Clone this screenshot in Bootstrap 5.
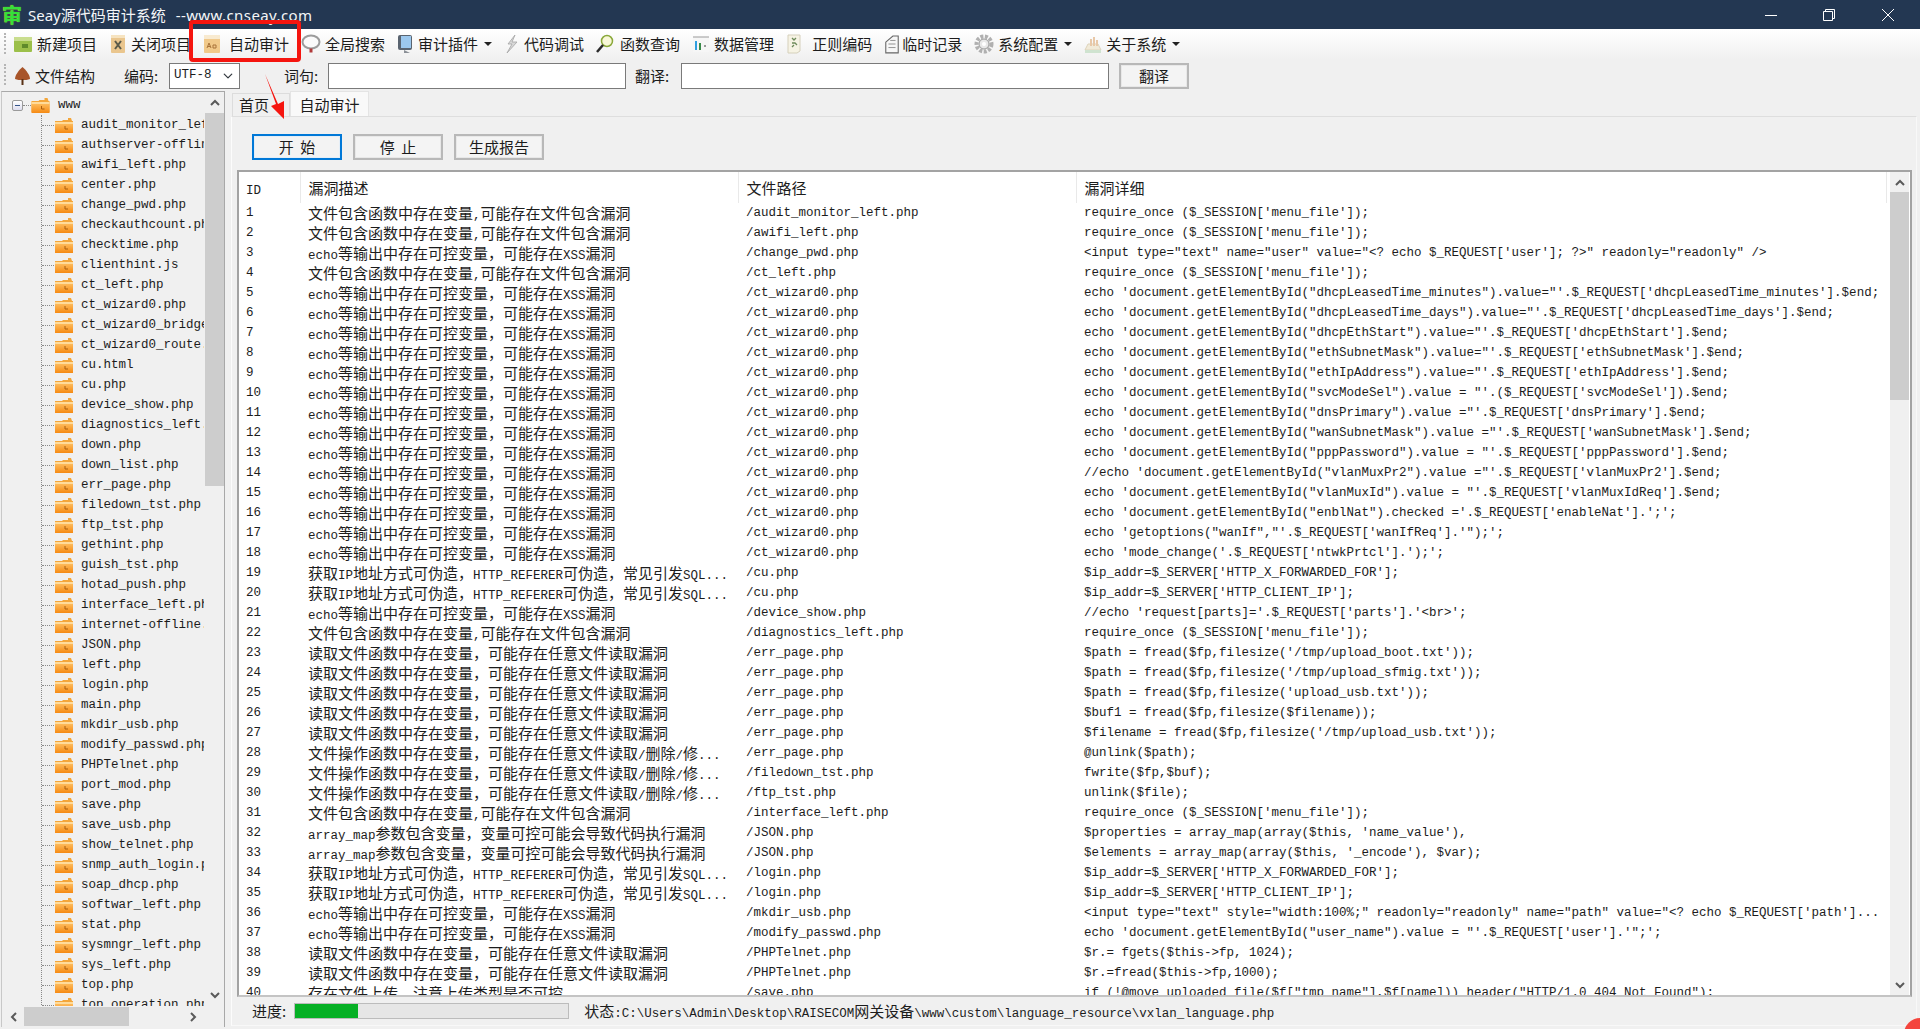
<!DOCTYPE html>
<html lang="zh-CN">
<head>
<meta charset="utf-8">
<title>Seay源代码审计系统</title>
<link href="https://cdn.jsdelivr.net/npm/bootstrap@5.3.0/dist/css/bootstrap.min.css" rel="stylesheet">
<style>
html,body{height:100%;overflow:hidden}
body{background:#f0f0f0;color:#1c1c1c;font-family:"Noto Sans CJK SC","Liberation Sans",sans-serif;font-size:15px;line-height:20px}
.la{font-family:"Liberation Mono","Noto Sans CJK SC",monospace;font-size:12.5px;line-height:1}
.shell{position:relative;width:1920px;height:1029px;overflow:hidden}
.wintitle{height:29px;background:#233752;color:#f4f6f8;padding-left:2px}
.appglyph{width:22px;font-size:20px;font-weight:700;color:#35e03a;line-height:29px;text-shadow:0 0 1px #c8e020}
.wintext{margin-left:4px;font-family:"Noto Sans","Noto Sans CJK SC",sans-serif;font-size:15px;white-space:pre}
.wintext em{font-style:normal;letter-spacing:.4px;margin-left:6px}
.winctl{margin-left:auto}
.winctl svg{display:block}
.ctlmin{margin-right:46px}.ctlmax{margin-right:47px}.ctlclose{margin-right:26px}
.bar1{height:31px;background:linear-gradient(#fff,#f0f0f0);padding-left:13px;column-gap:12px;white-space:nowrap}
.bar2{height:32px;position:relative;padding-left:14px;white-space:nowrap}
.grip{position:absolute;left:4px;top:4px;bottom:6px;width:2px;border-left:2px dotted #b5b5b5}
.bar1{position:relative}
.tool{display:flex;align-items:center;column-gap:4px}
.tool.tight{column-gap:2px}
.tool svg{display:block;flex:none}
.caret-dn{width:0;height:0;border:4px solid transparent;border-top-color:#222;border-bottom:0;margin-left:2px}
.lbl{margin-left:29px;width:45px}
.lbl2{margin-left:44px;width:44px;flex:none}
.lbl3{margin-left:9px;width:46px;flex:none}
.cmbx.form-select,.txtin.form-control{height:26px;min-height:26px;border:1px solid #7a7a7a;border-radius:0;padding:0 4px;background-color:#fff;box-shadow:none;color:#1c1c1c}
.cmbx.form-select{width:71px;flex:none;background-position:right 4px center;background-size:14px 10px;font-family:"Liberation Mono",monospace;font-size:12.5px}
.txtin.form-control{flex:none}
.in1{width:298px}.in2{width:428px}
.btn.dlgbtn{height:26px;width:90px;padding:0;border:2px solid #b8b8b8;border-radius:0;background:#f4f4f4;color:#1c1c1c;font-size:15px;line-height:20px;box-shadow:inset 0 0 0 1px #e8e8e8}
.btn.dlgbtn.on{border-color:#0078d7;background:#f3f3f3;box-shadow:inset 0 0 0 1px #e4eef7}
.btn.trbtn{width:70px;margin-left:10px;height:26px}
.work{flex:1 1 auto;min-height:0}
.treebox{width:224px;margin-left:1px;border:1px solid #a8a8a8;border-bottom:0;border-left-color:#c8c8c8;display:grid;grid-template-columns:1fr 19px;grid-template-rows:1fr 21px;column-gap:1px;margin-bottom:2px;flex:none;background:#f0f0f0}
.treeview{overflow:hidden;padding-top:3px;font-family:"Liberation Mono",monospace;font-size:12.5px;white-space:nowrap;min-width:0;min-height:0}
.rootrow{height:20px;display:flex;align-items:center;padding-left:10px}
.minus{width:11px;height:11px;border:1px solid #9a9a9a;border-radius:2px;background:linear-gradient(#fff,#dde);position:relative;flex:none}
.minus::after{content:"";position:absolute;left:2px;right:2px;top:4px;height:1px;background:#35558a}
.dashh{display:block;width:8px;border-top:1px dotted #888;flex:none}
.treelist{margin:0 0 0 39px;padding:0;list-style:none;border-left:1px dotted #888}
.treelist li{height:20px;display:flex;align-items:center}
.treelist li::before{content:"";width:12px;border-top:1px dotted #888;margin-right:1px;flex:none}
.treelist svg{flex:none;margin-right:8px}
.vs{background:#f0f0f0;display:flex;flex-direction:column;align-items:stretch}
.vs .sa{height:21px;flex:none;display:flex;align-items:center;justify-content:center}
.vs .th{background:#cdcdcd}
.tb1{height:373px;flex:none}
.sp{flex:1 1 auto}
.hs{grid-column:1 / 3;display:flex;align-items:center;background:#f0f0f0;padding-right:20px}
.hs .sa{width:22px;flex:none;display:flex;justify-content:center}
.hs .th{background:#cdcdcd;width:105px;height:19px;flex:none}
.right{margin-left:6px;width:1686px;flex:none;min-height:0}
.tabstrip{height:25px;padding-left:1px}
.tabit{height:23px;margin-top:2px;width:58px;background:#f0f0f0;border:1px solid #dcdcdc;border-bottom:0;text-align:left;padding-left:6px;line-height:22px}
.tabit.cur{height:25px;margin-top:0;width:79px;background:#f9f9f9;border-color:#e4e4e4;line-height:26px;text-align:center;padding-left:0}
.tabbody{height:910px;background:#f0f0f0;border:1px solid #fbfbfb;border-color:#dedede #f8f8f8 #f8f8f8 #fcfcfc;padding-top:17px}
.acts{padding-left:20px;column-gap:11px}
.grid-wrap{margin:10px 4px 0 5px;height:827px;border:2px solid #a3a3a3;border-bottom-color:#c4c4c4;background:#fff;display:flex;overflow:hidden}
.grid-scroll{width:1651px;overflow:hidden;flex:none}
.vgrid{table-layout:fixed;width:1647px;margin:0;background:#fff}
.vgrid>:not(caption)>*>*{padding:0 0 0 8px;border:0;background:transparent;box-shadow:none;color:#1c1c1c;white-space:nowrap;overflow:hidden;line-height:20px;font-weight:400;height:20px;vertical-align:middle}
.vgrid th{height:31px!important;border-right:1px solid #e9e9e9!important;font-size:15px}
.vgrid .cid{padding-left:7px}
.vgrid td.m,.vgrid td.cid{font-family:"Liberation Mono",monospace;font-size:12.5px}
.c0{width:61px}.c1{width:438px}.c2{width:338px}.c3{width:810px}
.gridsb{width:19px;flex:none;margin-right:3px}
.gridsb .th{height:208px;flex:none}
.gridsb .sa{height:20px}
.statusrow{height:28px;padding-left:20px;white-space:nowrap}
.pbar.progress{width:275px;height:16px;border-radius:0;background:#e6e6e6;border:1px solid #bcbcbc;margin-left:8px}
.pbar .progress-bar{background:#06b025}
.statustxt{margin-left:15px}
.redbox{position:absolute;left:189px;top:20px;width:112px;height:42px;border:4px solid #f5150f;border-radius:4px;pointer-events:none}
.redarrow{position:absolute;left:260px;top:70px;pointer-events:none}
.reddot{position:absolute;left:1904px;top:1018px;width:32px;height:32px;border-radius:50%;background:#f4453d}
</style>
</head>
<body>
<svg width="0" height="0" class="d-block" aria-hidden="true">
<defs>
<linearGradient id="fo" x1="0" y1="0" x2="0" y2="1"><stop offset="0" stop-color="#ffc56a"/><stop offset="1" stop-color="#f58a14"/></linearGradient>
<symbol id="folder" viewBox="0 0 18 15"><path d="M0 3h7l1-1h5V0h3l1 3h1v11H0z" fill="#f4a63a"/><rect x="0" y="4" width="18" height="11" fill="url(#fo)"/><rect x="0" y="4" width="18" height="2" fill="#ffdb9a"/><path d="M10 8v3h3" fill="none" stroke="#a85f10" stroke-width="1"/></symbol>
</defs>
</svg>
<div class="shell d-flex flex-column">
  <div class="wintitle d-flex align-items-center">
    <span class="appglyph">审</span>
    <span class="wintext">Seay源代码审计系统 <em>--www.cnseay.com</em></span>
    <div class="winctl d-flex align-items-center">
      <svg class="ctlmin" width="12" height="12" viewBox="0 0 12 12"><path d="M0 6.5h12" stroke="#fff"/></svg>
      <svg class="ctlmax" width="12" height="12" viewBox="0 0 12 12"><path d="M.5 2.5h9v9h-9zM2.5 2.5v-2h9v9h-2" fill="none" stroke="#fff"/></svg>
      <svg class="ctlclose" width="12" height="12" viewBox="0 0 12 12"><path d="M0 0l12 12M12 0L0 12" stroke="#fff"/></svg>
    </div>
  </div>
  <div class="bar1 d-flex align-items-center">
    <span class="grip"></span>
    <div class="tool"><svg width="20" height="18" viewBox="0 0 20 18"><rect x="1" y="2" width="18" height="15" rx="1" fill="#9cc04a"/><rect x="1" y="2" width="18" height="4" fill="#c9dd8e"/><rect x="9" y="9" width="6" height="4" fill="#5f8a2a"/></svg><span>新建项目</span></div>
    <div class="tool"><svg width="18" height="20" viewBox="0 0 18 20"><rect x="2" y="1" width="14" height="18" rx="1" fill="#eac68e"/><rect x="2" y="1" width="14" height="3" fill="#f6e3c0"/><path d="M6 7l6 8M12 7l-6 8" stroke="#5a5a4a" stroke-width="2"/></svg><span>关闭项目</span></div>
    <div class="tool"><svg width="18" height="20" viewBox="0 0 18 20"><rect x="1" y="1" width="16" height="18" rx="1" fill="#f1c98a"/><rect x="1" y="1" width="16" height="4" fill="#f8ead0"/><path d="M4 14l2-5 2 5M5 12.500h2M10 11h3v3h-3z" fill="none" stroke="#a8733a"/></svg><span class="ms-1">自动审计</span></div>
    <div class="tool"><svg width="20" height="20" viewBox="0 0 20 20"><ellipse cx="10" cy="8" rx="8.500" ry="6.500" fill="#fafafa" stroke="#9c9c9c" stroke-width="2"/><path d="M10 14.500v4" stroke="#b03a3a" stroke-width="3"/></svg><span>全局搜索</span></div>
    <div class="tool"><svg width="17" height="20" viewBox="0 0 17 20"><rect x="1" y="1" width="14" height="15" rx="2" fill="#5a6470"/><rect x="4" y="2" width="10" height="12" fill="#9cc8ee"/><path d="M7 16l6 3H7z" fill="#8a8f96"/></svg><span>审计插件</span><i class="caret-dn"></i></div>
    <div class="tool"><svg width="16" height="20" viewBox="0 0 16 20"><path d="M11 1L4 10h4l-5 9 10-11H8z" fill="#d8d8d8" stroke="#a5a5a5" stroke-width=".8"/></svg><span>代码调试</span></div>
    <div class="tool"><svg width="20" height="20" viewBox="0 0 20 20"><circle cx="11" cy="7" r="5.500" fill="#f8f8d8" stroke="#8aa83a" stroke-width="1.500"/><path d="M7 11l-6 7" stroke="#2a2a2a" stroke-width="2.500"/></svg><span>函数查询</span></div>
    <div class="tool"><svg width="18" height="20" viewBox="0 0 18 20"><rect x="1" y="3" width="16" height="15" fill="#f6f6f6"/><path d="M1 3h16" stroke="#9a9a9a"/><path d="M4 7v9" stroke="#2f9fe0" stroke-width="2"/><path d="M8 9v7" stroke="#3a8a4a" stroke-width="2"/><path d="M12 12h2" stroke="#999" stroke-width="2"/></svg><span>数据管理</span></div>
    <div class="tool"><svg width="22" height="20" viewBox="0 0 22 20"><path d="M2 1h12v16l-3 2H2z" fill="#f6f3e4" stroke="#d5d0bb"/><path d="M6 4l2 2 2-2M6 9h3l2 2M6 13l2-2" fill="none" stroke="#6d8a5a" stroke-width="1.300"/></svg><span>正则编码</span></div>
    <div class="tool tight"><svg width="16" height="22" viewBox="0 0 18 22"><path d="M2 9l8-7h6v19H2z" fill="#f7f7f7" stroke="#666" stroke-width="1.200"/><path d="M7 7h6M5 11h8M5 15h8" stroke="#888"/></svg><span>临时记录</span></div>
    <div class="tool"><svg width="20" height="20" viewBox="0 0 20 20"><circle cx="10" cy="10" r="7.500" fill="none" stroke="#b0b0b0" stroke-width="4" stroke-dasharray="3 1.500"/><circle cx="10" cy="10" r="5" fill="#e8e8e8" stroke="#999"/><circle cx="10" cy="10" r="2" fill="#fff"/></svg><span>系统配置</span><i class="caret-dn"></i></div>
    <div class="tool"><svg width="18" height="20" viewBox="0 0 18 20"><path d="M1 16l3-6h10l3 6z" fill="#f1ead8" stroke="#ddd3bb"/><path d="M7 12V5M10 12V3M13 12V6" stroke="#e8c8a8" stroke-width="2"/><path d="M1 16h16v3H1z" fill="#cfe3d0"/></svg><span>关于系统</span><i class="caret-dn"></i></div>
  </div>
  <div class="bar2 d-flex align-items-center">
    <span class="grip"></span>
    <div class="tool"><svg width="17" height="20" viewBox="0 0 17 20"><path d="M8.500 1C5 4 1 9 1 13c2 1 5 1 7.500 1s5.500 0 7.500-1c0-4-4-9-7.500-12z" fill="#a8552a"/><path d="M7.500 13h2v6h-2z" fill="#5a3216"/></svg><span>文件结构</span></div>
    <span class="lbl">编码:</span>
    <select class="form-select cmbx" aria-label="编码"><option>UTF-8</option></select>
    <span class="lbl2">词句:</span>
    <input class="form-control txtin in1" type="text" aria-label="词句">
    <span class="lbl3">翻译:</span>
    <input class="form-control txtin in2" type="text" aria-label="翻译">
    <button class="btn dlgbtn trbtn" type="button">翻译</button>
  </div>
  <div class="work d-flex">
    <div class="treebox">
      <div class="treeview">
        <div class="rootrow"><span class="minus"></span><span class="dashh"></span><svg width="19" height="15"><use href="#folder"/></svg><span class="ms-2 ps-0">www</span></div>
        <ul class="treelist">
          <li><svg width="18" height="15"><use href="#folder"/></svg>audit_monitor_left.php</li>
          <li><svg width="18" height="15"><use href="#folder"/></svg>authserver-offline.php</li>
          <li><svg width="18" height="15"><use href="#folder"/></svg>awifi_left.php</li>
          <li><svg width="18" height="15"><use href="#folder"/></svg>center.php</li>
          <li><svg width="18" height="15"><use href="#folder"/></svg>change_pwd.php</li>
          <li><svg width="18" height="15"><use href="#folder"/></svg>checkauthcount.php</li>
          <li><svg width="18" height="15"><use href="#folder"/></svg>checktime.php</li>
          <li><svg width="18" height="15"><use href="#folder"/></svg>clienthint.js</li>
          <li><svg width="18" height="15"><use href="#folder"/></svg>ct_left.php</li>
          <li><svg width="18" height="15"><use href="#folder"/></svg>ct_wizard0.php</li>
          <li><svg width="18" height="15"><use href="#folder"/></svg>ct_wizard0_bridge.php</li>
          <li><svg width="18" height="15"><use href="#folder"/></svg>ct_wizard0_route.php</li>
          <li><svg width="18" height="15"><use href="#folder"/></svg>cu.html</li>
          <li><svg width="18" height="15"><use href="#folder"/></svg>cu.php</li>
          <li><svg width="18" height="15"><use href="#folder"/></svg>device_show.php</li>
          <li><svg width="18" height="15"><use href="#folder"/></svg>diagnostics_left.php</li>
          <li><svg width="18" height="15"><use href="#folder"/></svg>down.php</li>
          <li><svg width="18" height="15"><use href="#folder"/></svg>down_list.php</li>
          <li><svg width="18" height="15"><use href="#folder"/></svg>err_page.php</li>
          <li><svg width="18" height="15"><use href="#folder"/></svg>filedown_tst.php</li>
          <li><svg width="18" height="15"><use href="#folder"/></svg>ftp_tst.php</li>
          <li><svg width="18" height="15"><use href="#folder"/></svg>gethint.php</li>
          <li><svg width="18" height="15"><use href="#folder"/></svg>guish_tst.php</li>
          <li><svg width="18" height="15"><use href="#folder"/></svg>hotad_push.php</li>
          <li><svg width="18" height="15"><use href="#folder"/></svg>interface_left.php</li>
          <li><svg width="18" height="15"><use href="#folder"/></svg>internet-offline.php</li>
          <li><svg width="18" height="15"><use href="#folder"/></svg>JSON.php</li>
          <li><svg width="18" height="15"><use href="#folder"/></svg>left.php</li>
          <li><svg width="18" height="15"><use href="#folder"/></svg>login.php</li>
          <li><svg width="18" height="15"><use href="#folder"/></svg>main.php</li>
          <li><svg width="18" height="15"><use href="#folder"/></svg>mkdir_usb.php</li>
          <li><svg width="18" height="15"><use href="#folder"/></svg>modify_passwd.php</li>
          <li><svg width="18" height="15"><use href="#folder"/></svg>PHPTelnet.php</li>
          <li><svg width="18" height="15"><use href="#folder"/></svg>port_mod.php</li>
          <li><svg width="18" height="15"><use href="#folder"/></svg>save.php</li>
          <li><svg width="18" height="15"><use href="#folder"/></svg>save_usb.php</li>
          <li><svg width="18" height="15"><use href="#folder"/></svg>show_telnet.php</li>
          <li><svg width="18" height="15"><use href="#folder"/></svg>snmp_auth_login.php</li>
          <li><svg width="18" height="15"><use href="#folder"/></svg>soap_dhcp.php</li>
          <li><svg width="18" height="15"><use href="#folder"/></svg>softwar_left.php</li>
          <li><svg width="18" height="15"><use href="#folder"/></svg>stat.php</li>
          <li><svg width="18" height="15"><use href="#folder"/></svg>sysmngr_left.php</li>
          <li><svg width="18" height="15"><use href="#folder"/></svg>sys_left.php</li>
          <li><svg width="18" height="15"><use href="#folder"/></svg>top.php</li>
          <li><svg width="18" height="15"><use href="#folder"/></svg>top_operation.php</li>
        </ul>
      </div>
      <div class="vs">
        <div class="sa"><svg width="10" height="7" viewBox="0 0 10 7"><path d="M1 6l4-4 4 4" fill="none" stroke="#5a5a5a" stroke-width="2"/></svg></div>
        <div class="th tb1"></div>
        <div class="sp"></div>
        <div class="sa"><svg width="10" height="7" viewBox="0 0 10 7"><path d="M1 1l4 4 4-4" fill="none" stroke="#5a5a5a" stroke-width="2"/></svg></div>
      </div>
      <div class="hs">
        <div class="sa"><svg width="7" height="10" viewBox="0 0 7 10"><path d="M6 1L2 5l4 4" fill="none" stroke="#5a5a5a" stroke-width="2"/></svg></div>
        <div class="th"></div>
        <div class="sp flex-grow-1"></div>
        <div class="sa"><svg width="7" height="10" viewBox="0 0 7 10"><path d="M1 1l4 4-4 4" fill="none" stroke="#5a5a5a" stroke-width="2"/></svg></div>
      </div>
    </div>
    <div class="right">
      <div class="tabstrip d-flex">
        <div class="tabit">首页</div>
        <div class="tabit cur">自动审计</div>
      </div>
      <div class="tabbody">
        <div class="acts d-flex">
          <button class="btn dlgbtn on" type="button">开&nbsp;&nbsp;始</button>
          <button class="btn dlgbtn" type="button">停&nbsp;&nbsp;止</button>
          <button class="btn dlgbtn" type="button">生成报告</button>
        </div>
        <div class="grid-wrap">
          <div class="grid-scroll">
            <table class="table table-borderless vgrid">
              <colgroup><col class="c0"><col class="c1"><col class="c2"><col class="c3"></colgroup>
              <thead><tr><th class="cid"><span class="la">ID</span></th><th>漏洞描述</th><th>文件路径</th><th>漏洞详细</th></tr></thead>
              <tbody>
<tr><td class="cid">1</td><td>文件包含函数中存在变量<span class="la">,</span>可能存在文件包含漏洞</td><td class="m">/audit_monitor_left.php</td><td class="m">require_once ($_SESSION['menu_file']);</td></tr>
<tr><td class="cid">2</td><td>文件包含函数中存在变量<span class="la">,</span>可能存在文件包含漏洞</td><td class="m">/awifi_left.php</td><td class="m">require_once ($_SESSION['menu_file']);</td></tr>
<tr><td class="cid">3</td><td><span class="la">echo</span>等输出中存在可控变量&#xFF0C;可能存在<span class="la">XSS</span>漏洞</td><td class="m">/change_pwd.php</td><td class="m">&lt;input  type="text" name="user"  value="&lt;? echo $_REQUEST['user']; ?&gt;" readonly="readonly" /&gt;</td></tr>
<tr><td class="cid">4</td><td>文件包含函数中存在变量<span class="la">,</span>可能存在文件包含漏洞</td><td class="m">/ct_left.php</td><td class="m">require_once ($_SESSION['menu_file']);</td></tr>
<tr><td class="cid">5</td><td><span class="la">echo</span>等输出中存在可控变量&#xFF0C;可能存在<span class="la">XSS</span>漏洞</td><td class="m">/ct_wizard0.php</td><td class="m">echo 'document.getElementById("dhcpLeasedTime_minutes").value="'.$_REQUEST['dhcpLeasedTime_minutes'].$end;</td></tr>
<tr><td class="cid">6</td><td><span class="la">echo</span>等输出中存在可控变量&#xFF0C;可能存在<span class="la">XSS</span>漏洞</td><td class="m">/ct_wizard0.php</td><td class="m">echo 'document.getElementById("dhcpLeasedTime_days").value="'.$_REQUEST['dhcpLeasedTime_days'].$end;</td></tr>
<tr><td class="cid">7</td><td><span class="la">echo</span>等输出中存在可控变量&#xFF0C;可能存在<span class="la">XSS</span>漏洞</td><td class="m">/ct_wizard0.php</td><td class="m">echo 'document.getElementById("dhcpEthStart").value="'.$_REQUEST['dhcpEthStart'].$end;</td></tr>
<tr><td class="cid">8</td><td><span class="la">echo</span>等输出中存在可控变量&#xFF0C;可能存在<span class="la">XSS</span>漏洞</td><td class="m">/ct_wizard0.php</td><td class="m">echo 'document.getElementById("ethSubnetMask").value="'.$_REQUEST['ethSubnetMask'].$end;</td></tr>
<tr><td class="cid">9</td><td><span class="la">echo</span>等输出中存在可控变量&#xFF0C;可能存在<span class="la">XSS</span>漏洞</td><td class="m">/ct_wizard0.php</td><td class="m">echo 'document.getElementById("ethIpAddress").value="'.$_REQUEST['ethIpAddress'].$end;</td></tr>
<tr><td class="cid">10</td><td><span class="la">echo</span>等输出中存在可控变量&#xFF0C;可能存在<span class="la">XSS</span>漏洞</td><td class="m">/ct_wizard0.php</td><td class="m">echo 'document.getElementById("svcModeSel").value = "'.($_REQUEST['svcModeSel']).$end;</td></tr>
<tr><td class="cid">11</td><td><span class="la">echo</span>等输出中存在可控变量&#xFF0C;可能存在<span class="la">XSS</span>漏洞</td><td class="m">/ct_wizard0.php</td><td class="m">echo 'document.getElementById("dnsPrimary").value ="'.$_REQUEST['dnsPrimary'].$end;</td></tr>
<tr><td class="cid">12</td><td><span class="la">echo</span>等输出中存在可控变量&#xFF0C;可能存在<span class="la">XSS</span>漏洞</td><td class="m">/ct_wizard0.php</td><td class="m">echo 'document.getElementById("wanSubnetMask").value ="'.$_REQUEST['wanSubnetMask'].$end;</td></tr>
<tr><td class="cid">13</td><td><span class="la">echo</span>等输出中存在可控变量&#xFF0C;可能存在<span class="la">XSS</span>漏洞</td><td class="m">/ct_wizard0.php</td><td class="m">echo 'document.getElementById("pppPassword").value = "'.$_REQUEST['pppPassword'].$end;</td></tr>
<tr><td class="cid">14</td><td><span class="la">echo</span>等输出中存在可控变量&#xFF0C;可能存在<span class="la">XSS</span>漏洞</td><td class="m">/ct_wizard0.php</td><td class="m">//echo 'document.getElementById("vlanMuxPr2").value ="'.$_REQUEST['vlanMuxPr2'].$end;</td></tr>
<tr><td class="cid">15</td><td><span class="la">echo</span>等输出中存在可控变量&#xFF0C;可能存在<span class="la">XSS</span>漏洞</td><td class="m">/ct_wizard0.php</td><td class="m">echo 'document.getElementById("vlanMuxId").value = "'.$_REQUEST['vlanMuxIdReq'].$end;</td></tr>
<tr><td class="cid">16</td><td><span class="la">echo</span>等输出中存在可控变量&#xFF0C;可能存在<span class="la">XSS</span>漏洞</td><td class="m">/ct_wizard0.php</td><td class="m">echo 'document.getElementById("enblNat").checked ='.$_REQUEST['enableNat'].';';</td></tr>
<tr><td class="cid">17</td><td><span class="la">echo</span>等输出中存在可控变量&#xFF0C;可能存在<span class="la">XSS</span>漏洞</td><td class="m">/ct_wizard0.php</td><td class="m">echo 'getoptions("wanIf","'.$_REQUEST['wanIfReq'].'");';</td></tr>
<tr><td class="cid">18</td><td><span class="la">echo</span>等输出中存在可控变量&#xFF0C;可能存在<span class="la">XSS</span>漏洞</td><td class="m">/ct_wizard0.php</td><td class="m">echo 'mode_change('.$_REQUEST['ntwkPrtcl'].');';</td></tr>
<tr><td class="cid">19</td><td>获取<span class="la">IP</span>地址方式可伪造&#xFF0C;<span class="la">HTTP_REFERER</span>可伪造&#xFF0C;常见引发<span class="la">SQL...</span></td><td class="m">/cu.php</td><td class="m">$ip_addr=$_SERVER['HTTP_X_FORWARDED_FOR'];</td></tr>
<tr><td class="cid">20</td><td>获取<span class="la">IP</span>地址方式可伪造&#xFF0C;<span class="la">HTTP_REFERER</span>可伪造&#xFF0C;常见引发<span class="la">SQL...</span></td><td class="m">/cu.php</td><td class="m">$ip_addr=$_SERVER['HTTP_CLIENT_IP'];</td></tr>
<tr><td class="cid">21</td><td><span class="la">echo</span>等输出中存在可控变量&#xFF0C;可能存在<span class="la">XSS</span>漏洞</td><td class="m">/device_show.php</td><td class="m">//echo 'request[parts]='.$_REQUEST['parts'].'&lt;br&gt;';</td></tr>
<tr><td class="cid">22</td><td>文件包含函数中存在变量<span class="la">,</span>可能存在文件包含漏洞</td><td class="m">/diagnostics_left.php</td><td class="m">require_once ($_SESSION['menu_file']);</td></tr>
<tr><td class="cid">23</td><td>读取文件函数中存在变量&#xFF0C;可能存在任意文件读取漏洞</td><td class="m">/err_page.php</td><td class="m">$path = fread($fp,filesize('/tmp/upload_boot.txt'));</td></tr>
<tr><td class="cid">24</td><td>读取文件函数中存在变量&#xFF0C;可能存在任意文件读取漏洞</td><td class="m">/err_page.php</td><td class="m">$path = fread($fp,filesize('/tmp/upload_sfmig.txt'));</td></tr>
<tr><td class="cid">25</td><td>读取文件函数中存在变量&#xFF0C;可能存在任意文件读取漏洞</td><td class="m">/err_page.php</td><td class="m">$path = fread($fp,filesize('upload_usb.txt'));</td></tr>
<tr><td class="cid">26</td><td>读取文件函数中存在变量&#xFF0C;可能存在任意文件读取漏洞</td><td class="m">/err_page.php</td><td class="m">$buf1 = fread($fp,filesize($filename));</td></tr>
<tr><td class="cid">27</td><td>读取文件函数中存在变量&#xFF0C;可能存在任意文件读取漏洞</td><td class="m">/err_page.php</td><td class="m">$filename =  fread($fp,filesize('/tmp/upload_usb.txt'));</td></tr>
<tr><td class="cid">28</td><td>文件操作函数中存在变量&#xFF0C;可能存在任意文件读取<span class="la">/</span>删除<span class="la">/</span>修<span class="la">...</span></td><td class="m">/err_page.php</td><td class="m">@unlink($path);</td></tr>
<tr><td class="cid">29</td><td>文件操作函数中存在变量&#xFF0C;可能存在任意文件读取<span class="la">/</span>删除<span class="la">/</span>修<span class="la">...</span></td><td class="m">/filedown_tst.php</td><td class="m">fwrite($fp,$buf);</td></tr>
<tr><td class="cid">30</td><td>文件操作函数中存在变量&#xFF0C;可能存在任意文件读取<span class="la">/</span>删除<span class="la">/</span>修<span class="la">...</span></td><td class="m">/ftp_tst.php</td><td class="m">unlink($file);</td></tr>
<tr><td class="cid">31</td><td>文件包含函数中存在变量<span class="la">,</span>可能存在文件包含漏洞</td><td class="m">/interface_left.php</td><td class="m">require_once ($_SESSION['menu_file']);</td></tr>
<tr><td class="cid">32</td><td><span class="la">array_map</span>参数包含变量&#xFF0C;变量可控可能会导致代码执行漏洞</td><td class="m">/JSON.php</td><td class="m">$properties = array_map(array($this, 'name_value'),</td></tr>
<tr><td class="cid">33</td><td><span class="la">array_map</span>参数包含变量&#xFF0C;变量可控可能会导致代码执行漏洞</td><td class="m">/JSON.php</td><td class="m">$elements = array_map(array($this, '_encode'), $var);</td></tr>
<tr><td class="cid">34</td><td>获取<span class="la">IP</span>地址方式可伪造&#xFF0C;<span class="la">HTTP_REFERER</span>可伪造&#xFF0C;常见引发<span class="la">SQL...</span></td><td class="m">/login.php</td><td class="m">$ip_addr=$_SERVER['HTTP_X_FORWARDED_FOR'];</td></tr>
<tr><td class="cid">35</td><td>获取<span class="la">IP</span>地址方式可伪造&#xFF0C;<span class="la">HTTP_REFERER</span>可伪造&#xFF0C;常见引发<span class="la">SQL...</span></td><td class="m">/login.php</td><td class="m">$ip_addr=$_SERVER['HTTP_CLIENT_IP'];</td></tr>
<tr><td class="cid">36</td><td><span class="la">echo</span>等输出中存在可控变量&#xFF0C;可能存在<span class="la">XSS</span>漏洞</td><td class="m">/mkdir_usb.php</td><td class="m">&lt;input type="text" style="width:100%;" readonly="readonly" name="path" value="&lt;? echo $_REQUEST['path']...</td></tr>
<tr><td class="cid">37</td><td><span class="la">echo</span>等输出中存在可控变量&#xFF0C;可能存在<span class="la">XSS</span>漏洞</td><td class="m">/modify_passwd.php</td><td class="m">echo 'document.getElementById("user_name").value = "'.$_REQUEST['user'].'";';</td></tr>
<tr><td class="cid">38</td><td>读取文件函数中存在变量&#xFF0C;可能存在任意文件读取漏洞</td><td class="m">/PHPTelnet.php</td><td class="m">$r.= fgets($this-&gt;fp, 1024);</td></tr>
<tr><td class="cid">39</td><td>读取文件函数中存在变量&#xFF0C;可能存在任意文件读取漏洞</td><td class="m">/PHPTelnet.php</td><td class="m">$r.=fread($this-&gt;fp,1000);</td></tr>
<tr><td class="cid">40</td><td>存在文件上传&#xFF0C;注意上传类型是否可控</td><td class="m">/save.php</td><td class="m">if (!@move_uploaded_file($f["tmp_name"],$f[name])) header("HTTP/1.0 404 Not Found");</td></tr>
              </tbody>
            </table>
          </div>
          <div class="vs gridsb">
            <div class="sa"><svg width="10" height="7" viewBox="0 0 10 7"><path d="M1 6l4-4 4 4" fill="none" stroke="#5a5a5a" stroke-width="2"/></svg></div>
            <div class="th"></div>
            <div class="sp"></div>
            <div class="sa"><svg width="10" height="7" viewBox="0 0 10 7"><path d="M1 1l4 4 4-4" fill="none" stroke="#5a5a5a" stroke-width="2"/></svg></div>
          </div>
        </div>
        <div class="statusrow d-flex align-items-center">
          <span>进度:</span>
          <div class="progress pbar" role="progressbar" aria-label="进度" aria-valuenow="23" aria-valuemin="0" aria-valuemax="100"><div class="progress-bar" style="width:23%"></div></div>
          <span class="statustxt">状态<span class="la">:C:\Users\Admin\Desktop\RAISECOM</span>网关设备<span class="la">\www\custom\language_resource\vxlan_language.php</span></span>
        </div>
      </div>
    </div>
  </div>
  <div class="redbox"></div>
  <svg class="redarrow" width="30" height="52" viewBox="0 0 30 52"><path d="M5 4l13 30 6-3 0 18-13-13 5-2z" fill="#f5150f"/></svg>
  <div class="reddot"></div>
</div>
</body>
</html>
